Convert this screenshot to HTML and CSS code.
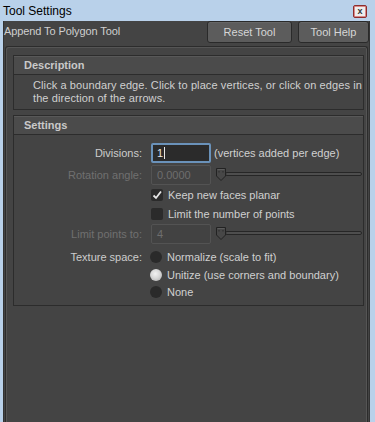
FILE: index.html
```html
<!DOCTYPE html>
<html>
<head>
<meta charset="utf-8">
<link rel="stylesheet" href="styles.css">
</head>
<body>
<div class="window">
  <div class="titlebar">
    <span class="title">Tool Settings</span>
    <span class="close"><span class="close-x">x</span></span>
  </div>
  <div class="client">
    <div class="toprow">
      <span class="toolname">Append To Polygon Tool</span>
      <div class="buttons">
        <button class="btn btn-reset">Reset Tool</button>
        <button class="btn btn-help">Tool Help</button>
      </div>
    </div>
    <div class="scroll">
      <div class="section">
        <div class="sec-head">Description</div>
        <div class="sec-body desc">Click a boundary edge. Click to place vertices, or click on edges in the direction of the arrows.</div>
      </div>
      <div class="section">
        <div class="sec-head">Settings</div>
        <div class="sec-body settings">
          <div class="row r1">
            <span class="label">Divisions:</span>
            <div class="ctrl">
              <span class="field focus">1<span class="caret"></span></span>
              <span class="note">(vertices added per edge)</span>
            </div>
          </div>
          <div class="row r2">
            <span class="label dim">Rotation angle:</span>
            <div class="ctrl">
              <span class="field disabled">0.0000</span>
              <span class="slider">
                <svg class="handle" width="12" height="15" viewBox="0 0 12 15"><path d="M1.5 1.5 H10.5 V9 L6 13.5 L1.5 9 Z" fill="#474747" stroke="#222" stroke-width="1"/><path d="M2.5 2.5 H9.5" stroke="#5c5c5c" stroke-width="1"/><rect x="3.5" y="4" width="1" height="1.5" fill="#2a2a2a"/><rect x="7.5" y="4" width="1" height="1.5" fill="#2a2a2a"/></svg>
                <span class="track"></span>
              </span>
            </div>
          </div>
          <div class="row r3">
            <span class="label"></span>
            <div class="ctrl">
              <span class="check"><svg width="12" height="12" viewBox="0 0 12 12"><path d="M2.5 6.5 L5 9 L10 2.5" fill="none" stroke="#e6e6e6" stroke-width="1.8"/></svg></span>
              <span class="clabel">Keep new faces planar</span>
            </div>
          </div>
          <div class="row r4">
            <span class="label"></span>
            <div class="ctrl">
              <span class="check"></span>
              <span class="clabel">Limit the number of points</span>
            </div>
          </div>
          <div class="row r5">
            <span class="label dim">Limit points to:</span>
            <div class="ctrl">
              <span class="field disabled">4</span>
              <span class="slider">
                <svg class="handle" width="12" height="15" viewBox="0 0 12 15"><path d="M1.5 1.5 H10.5 V9 L6 13.5 L1.5 9 Z" fill="#474747" stroke="#222" stroke-width="1"/><path d="M2.5 2.5 H9.5" stroke="#5c5c5c" stroke-width="1"/><rect x="3.5" y="4" width="1" height="1.5" fill="#2a2a2a"/><rect x="7.5" y="4" width="1" height="1.5" fill="#2a2a2a"/></svg>
                <span class="track"></span>
              </span>
            </div>
          </div>
          <div class="row r6">
            <span class="label">Texture space:</span>
            <div class="ctrl">
              <span class="radio"></span>
              <span class="rlabel">Normalize (scale to fit)</span>
            </div>
          </div>
          <div class="row r7">
            <span class="label"></span>
            <div class="ctrl">
              <span class="radio on"></span>
              <span class="rlabel">Unitize (use corners and boundary)</span>
            </div>
          </div>
          <div class="row r8">
            <span class="label"></span>
            <div class="ctrl">
              <span class="radio"></span>
              <span class="rlabel">None</span>
            </div>
          </div>
        </div>
      </div>
    </div>
  </div>
</div>
</body>
</html>
```
FILE: styles.css
```css
* { box-sizing: border-box; }
html, body {
  margin: 0;
  padding: 0;
  width: 375px;
  height: 422px;
  overflow: hidden;
  background: #b9d1ea;
  font-family: "Liberation Sans", Arial, sans-serif;
}
.window {
  display: flex;
  flex-direction: column;
  height: 422px;
}
.titlebar {
  height: 21px;
  display: flex;
  align-items: center;
  justify-content: space-between;
  padding: 0 8px 0 3px;
  color: #000;
  font-size: 12px;
}
.title { padding-top: 1px; }
.close {
  width: 14px;
  height: 13px;
  border: 1px solid #8c2e2e;
  border-radius: 2px;
  background: #d98a8a;
  display: flex;
  align-items: center;
  justify-content: center;
  margin-top: 1px;
}
.close-x {
  width: 10px;
  height: 9px;
  background: #eeeeee;
  color: #333;
  font-size: 9px;
  font-weight: bold;
  line-height: 8px;
  text-align: center;
}
.client {
  flex: 1;
  margin-left: 3px;
  width: 367px;
  background: #444444;
  border-left: 1px solid #333;
  border-right: 1px solid #333;
  display: flex;
  flex-direction: column;
}
.toprow {
  height: 25px;
  display: flex;
  justify-content: space-between;
  align-items: flex-start;
}
.toolname {
  color: #cfcfcf;
  font-size: 11px;
  padding-top: 4px;
  letter-spacing: -0.1px;
}
.buttons {
  display: flex;
  gap: 6px;
  padding-right: 0;
}
.btn {
  height: 22px;
  border: 1px solid #2a2a2a;
  border-radius: 3px;
  background: #5c5c5c;
  color: #d6d6d6;
  font-family: "Liberation Sans", Arial, sans-serif;
  font-size: 11px;
  padding: 0;
  box-shadow: inset 0 1px 0 #666;
}
.btn-reset { width: 85px; }
.btn-help { width: 71px; }
.scroll {
  flex: 1;
  margin: 0 1px 0 1px;
  border: 1px solid #2c2c2c;
  border-bottom: none;
  border-radius: 3px 3px 0 0;
  box-shadow: inset 1px 1px 0 #555, inset -1px 0 0 #555;
  padding: 8px 3px 0 7px;
}
.section + .section { margin-top: 5px; }
.sec-head {
  height: 20px;
  border: 1px solid #2c2c2c;
  background: #4b4b4b;
  box-shadow: inset 0 1px 0 #585858;
  color: #c9c9c9;
  font-weight: bold;
  font-size: 11px;
  padding-left: 10px;
  display: flex;
  align-items: center;
}
.sec-body {
  border: 1px solid #2c2c2c;
  border-top: none;
  background: #444;
  color: #d0d0d0;
  font-size: 11px;
}
.desc {
  padding: 4px 0 3px 19px;
  line-height: 13px;
  height: 35px;
  letter-spacing: 0.1px;
}
.settings {
  padding: 8px 0 4px 0;
}
.row {
  display: grid;
  grid-template-columns: 128px 1fr;
  column-gap: 9px;
  align-items: center;
}
.r1 { height: 20px; }
.r2 { height: 20px; margin-top: 2px; }
.r3 { height: 20px; }
.r4 { height: 18px; }
.r5 { height: 22px; }
.r6 { height: 18px; margin-top: 3px; }
.r7 { height: 17px; }
.r8 { height: 18px; }
.label {
  text-align: right;
  color: #cccccc;
}
.label.dim { color: #707070; }
.ctrl {
  display: flex;
  align-items: center;
  height: 100%;
}
.field {
  width: 60px;
  height: 20px;
  border-radius: 2px;
  display: flex;
  align-items: center;
  padding-left: 6px;
  flex: none;
}
.field.focus {
  background: #2b2b2b;
  border: 2px solid #6a92ba;
  color: #e8e8e8;
  padding-left: 4px;
}
.caret {
  display: inline-block;
  width: 1px;
  height: 12px;
  background: #e8e8e8;
  margin-left: 1px;
}
.field.disabled {
  background: #424242;
  border: 1px solid #535353;
  color: #6e6e6e;
  padding-left: 5px;
}
.note {
  margin-left: 3px;
  color: #d0d0d0;
}
.slider {
  margin-left: 4px;
  flex: 1;
  display: flex;
  align-items: center;
  margin-right: 1px;
  position: relative;
  height: 16px;
}
.handle {
  flex: none;
  position: relative;
  z-index: 1;
  margin-top: -1px;
}
.track {
  flex: 1;
  height: 4px;
  border: 1px solid #262626;
  border-radius: 2px;
  background: #4e4e4e;
  margin-left: -2px;
  margin-top: -3px;
}
.check {
  width: 12px;
  height: 12px;
  background: #2b2b2b;
  border-radius: 2px;
  flex: none;
  display: flex;
}
.clabel { margin-left: 5px; color: #d0d0d0; }
.radio {
  width: 12px;
  height: 12px;
  border-radius: 50%;
  background: #2a2a2a;
  flex: none;
  margin-left: -1px;
}
.radio.on {
  background: radial-gradient(circle at 45% 40%, #f2f2f2 0, #d8d8d8 45%, #a8a8a8 100%);
}
.rlabel { margin-left: 5px; color: #d0d0d0; }
```
